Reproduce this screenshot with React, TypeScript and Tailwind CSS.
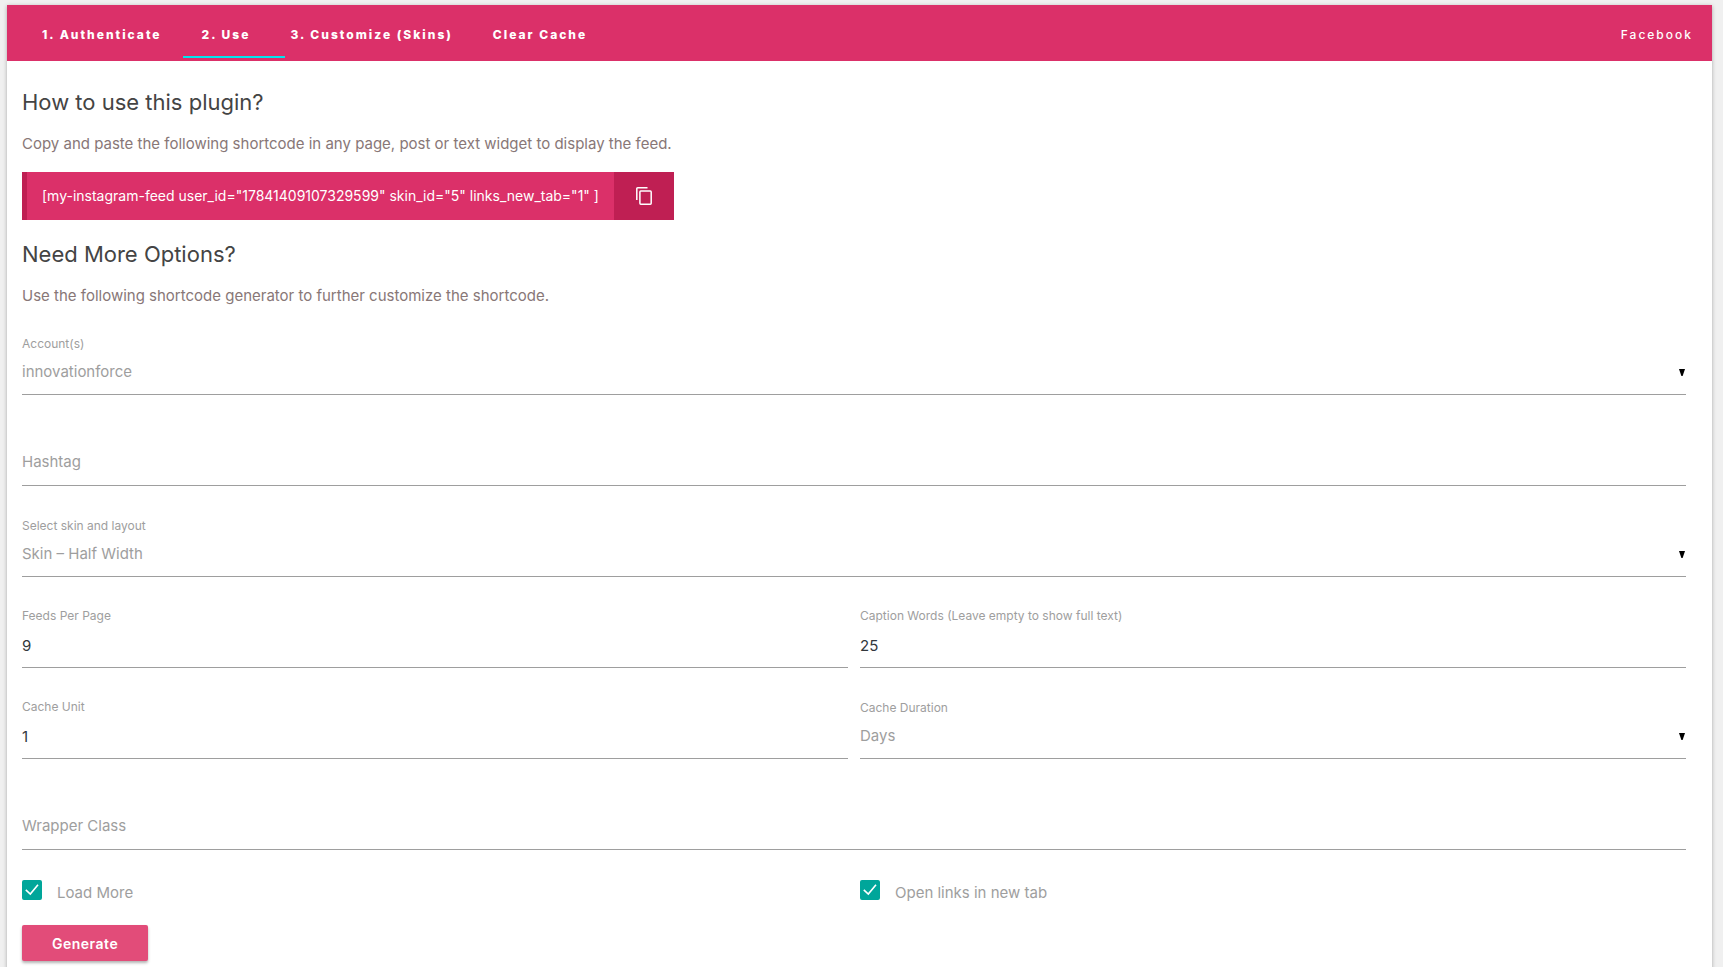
import React, { useState } from 'react';

const NAV_ITEMS = [
  { label: '1. Authenticate', active: false },
  { label: '2. Use', active: true },
  { label: '3. Customize (Skins)', active: false },
  { label: 'Clear Cache', active: false },
];

const SHORTCODE = '[my-instagram-feed user_id="17841409107329599" skin_id="5" links_new_tab="1" ]';

interface TextFieldProps {
  id: string;
  label: string;
  value: string;
  onChange: (value: string) => void;
}

// Label sits above the value
const TextField: React.FC<TextFieldProps> = ({ id, label, value, onChange }) => (
  <div className="flex h-[91px] flex-col justify-end">
    <label htmlFor={id} className="text-xs leading-4 text-[#9e9e9e]">{label}</label>
    <input
      id={id}
      type="text"
      value={value}
      onChange={e => onChange(e.target.value)}
      className="h-11 w-full border-b border-[#9e9e9e] bg-transparent text-[15px] text-[#32373c] outline-none"
    />
  </div>
);

// Label fills the empty input
const EmptyField: React.FC<{ id: string; label: string }> = ({ id, label }) => (
  <div className="flex h-[91px] flex-col justify-end">
    <input
      id={id}
      type="text"
      aria-label={label}
      placeholder={label}
      className="h-12 w-full border-b border-[#9e9e9e] bg-transparent text-[15px] leading-6 text-[#32373c] outline-none placeholder:text-[#9e9e9e]"
    />
  </div>
);

const SelectField: React.FC<{ id: string; label: string; options: string[] }> = ({ id, label, options }) => (
  <div className="relative flex h-[91px] flex-col justify-end">
    <label htmlFor={id} className="text-xs leading-4 text-[#9e9e9e]">{label}</label>
    <select
      id={id}
      className="h-[43px] w-full appearance-none border-b border-[#9e9e9e] bg-transparent pb-0.5 text-[15px] text-[#9e9e9e] outline-none"
    >
      {options.map(option => <option key={option}>{option}</option>)}
    </select>
    <svg className="pointer-events-none absolute right-px bottom-[19px] h-[7px] w-[6px]" viewBox="0 0 6 7">
      <path d="M0 0h6L3.6 7H2.4z" fill="#000" />
    </svg>
  </div>
);

const CheckField: React.FC<{ label: string }> = ({ label }) => (
  <label className="flex items-center text-[15px] leading-5 text-[#9e9e9e]">
    <span className="relative mr-[15px] size-5">
      <input type="checkbox" defaultChecked className="block size-5 appearance-none rounded-xs border-2 border-[#5a5a5a] checked:border-[#00a69a] checked:bg-[#00a69a]" />
      <svg className="pointer-events-none absolute inset-0" viewBox="0 0 20 20" fill="none" stroke="#fff" strokeWidth="1.6">
        <path d="M3.8 9.8 8.3 14 16 4.8" />
      </svg>
    </span>
    <span className="pt-1.5">{label}</span>
  </label>
);

export default function App() {
  const [feeds, setFeeds] = useState('9');
  const [words, setWords] = useState('25');
  const [cacheUnit, setCacheUnit] = useState('1');

  return (
    <div className="min-h-screen overflow-hidden bg-[#f0f0f0] pt-[5px] pr-[11px] pl-[7px] font-['Inter',sans-serif]">
      <main className="min-h-screen bg-white shadow-[0_1px_4px_rgba(0,0,0,0.3)]">
        <nav className="flex h-14 items-center justify-between bg-[#db3069] px-[15px] text-xs tracking-[2px] text-white">
          <ul className="flex h-full font-extrabold">
            {NAV_ITEMS.map(item => (
              <li key={item.label} className="relative h-full">
                <a href="#" className="flex h-full items-center px-5 pt-[3px]">{item.label}</a>
                {item.active && <span className="absolute bottom-[3px] left-px h-0.5 w-[102px] bg-[#00e5ee]" />}
              </li>
            ))}
          </ul>
          <a href="#" className="px-1 pt-[3px] font-medium">Facebook</a>
        </nav>

        <div className="pr-[26px] pl-[15px]">
          <section>
            <h5 className="pt-[26px] text-[22px] leading-[30px] text-[#444]">How to use this plugin?</h5>
            <p className="mt-[17px] text-[15px] leading-5 text-[#877]">
              Copy and paste the following shortcode in any page, post or text widget to display the feed.
            </p>
            <div className="mt-[18px] flex h-12 w-fit">
              <code className="flex items-center border-l-[5px] border-[#bf1f53] bg-[#db3069] px-[15px] font-['Inter',sans-serif] text-sm text-white">
                {SHORTCODE}
              </code>
              <button aria-label="Copy shortcode" className="flex w-[60px] items-center justify-center bg-[#bf1f53]">
                <svg className="h-[18px] w-4" viewBox="0 0 16 18" fill="none" stroke="#fff" strokeWidth="1.5">
                  <path d="M.8 13V1.7Q.8.8 1.7.8H11.5" />
                  <rect x="3.9" y="4.1" width="11.3" height="13.1" rx="0.9" />
                </svg>
              </button>
            </div>
          </section>

          <section>
            <h5 className="pt-[19px] text-[22px] leading-[30px] text-[#444]">Need More Options?</h5>
            <p className="mt-[17px] text-[15px] leading-5 text-[#877]">
              Use the following shortcode generator to further customize the shortcode.
            </p>
            <form onSubmit={e => e.preventDefault()} className="-mt-0.5">
              <SelectField id="account" label="Account(s)" options={['innovationforce']} />
              <EmptyField id="hashtag" label="Hashtag" />
              <SelectField id="skin" label="Select skin and layout" options={['Skin – Half Width']} />
              <div className="grid grid-cols-2 gap-x-3">
                <TextField id="feeds" label="Feeds Per Page" value={feeds} onChange={setFeeds} />
                <TextField id="words" label="Caption Words (Leave empty to show full text)" value={words} onChange={setWords} />
                <TextField id="cache-unit" label="Cache Unit" value={cacheUnit} onChange={setCacheUnit} />
                <SelectField id="cache-duration" label="Cache Duration" options={['Days', 'Hours', 'Minutes']} />
              </div>
              <EmptyField id="wrapper" label="Wrapper Class" />
              <div className="mt-[27px] grid grid-cols-2 gap-x-3">
                <CheckField label="Load More" />
                <CheckField label="Open links in new tab" />
              </div>
              <button
                type="submit"
                className="mt-[22px] mb-8 h-9 rounded-xs bg-[#e24c79] px-[30px] pt-0.5 text-sm font-semibold tracking-[0.5px] text-white shadow-[0_2px_3px_rgba(0,0,0,0.3)]"
              >
                Generate
              </button>
            </form>
          </section>
        </div>
      </main>
    </div>
  );
}
